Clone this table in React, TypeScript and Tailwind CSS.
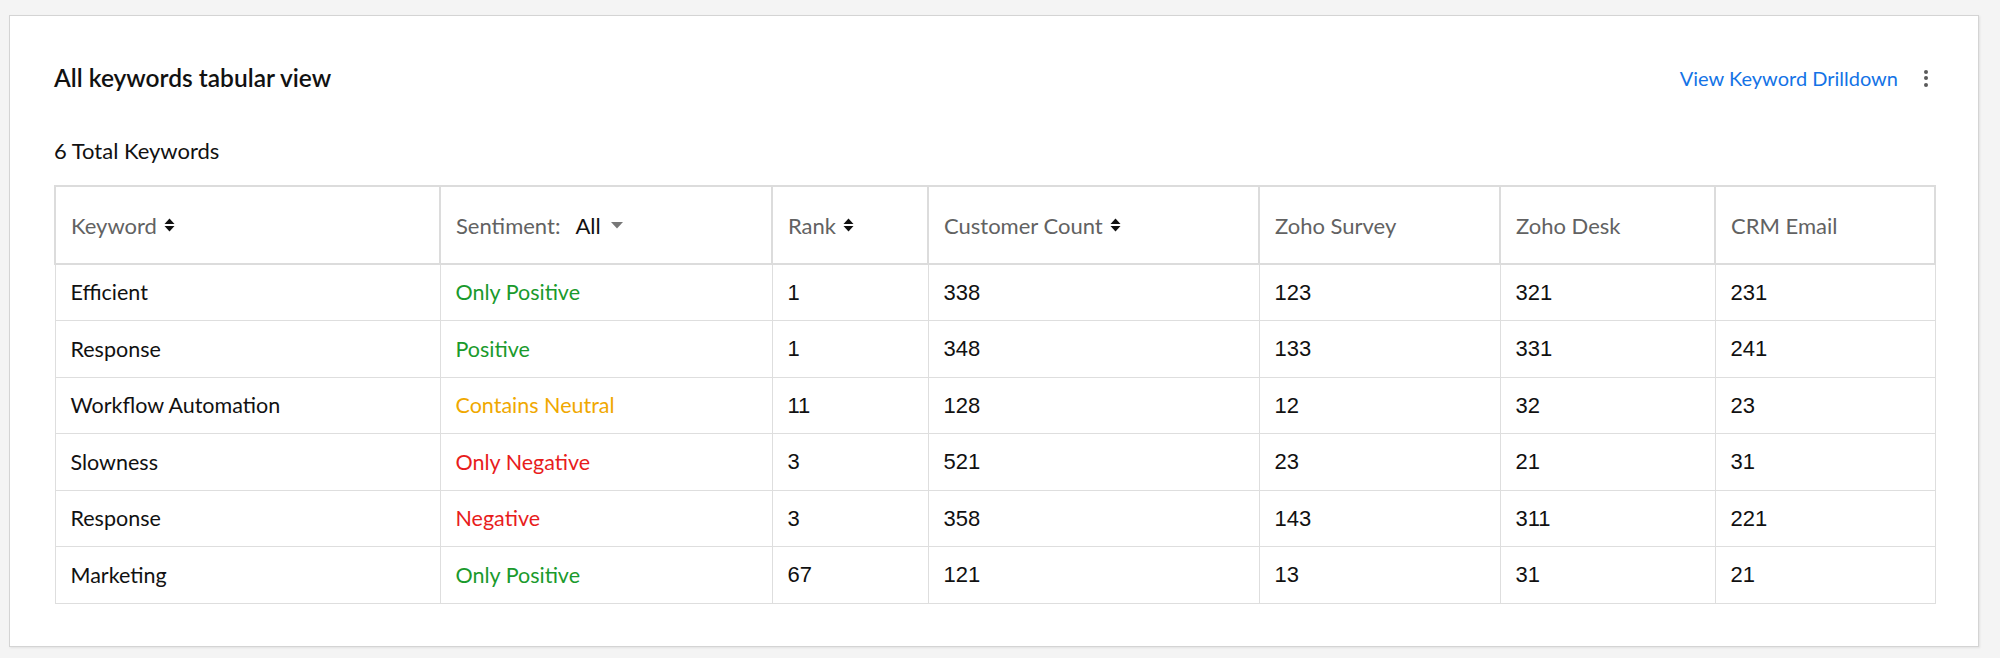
type Sentiment = "pos" | "neu" | "neg";

interface Row {
  keyword: string;
  sentiment: string;
  tone: Sentiment;
  rank: number;
  customers: number;
  survey: number;
  desk: number;
  crm: number;
}

const rows: Row[] = [
  { keyword: "Efficient", sentiment: "Only Positive", tone: "pos", rank: 1, customers: 338, survey: 123, desk: 321, crm: 231 },
  { keyword: "Response", sentiment: "Positive", tone: "pos", rank: 1, customers: 348, survey: 133, desk: 331, crm: 241 },
  { keyword: "Workflow Automation", sentiment: "Contains Neutral", tone: "neu", rank: 11, customers: 128, survey: 12, desk: 32, crm: 23 },
  { keyword: "Slowness", sentiment: "Only Negative", tone: "neg", rank: 3, customers: 521, survey: 23, desk: 21, crm: 31 },
  { keyword: "Response", sentiment: "Negative", tone: "neg", rank: 3, customers: 358, survey: 143, desk: 311, crm: 221 },
  { keyword: "Marketing", sentiment: "Only Positive", tone: "pos", rank: 67, customers: 121, survey: 13, desk: 31, crm: 21 },
];

const toneClass: Record<Sentiment, string> = {
  pos: "text-[#1a9a2c]",
  neu: "text-[#f0a800]",
  neg: "text-[#e81c1c]",
};

function SortIcon() {
  return (
    <svg width="11" height="14" viewBox="0 0 11 14" className="ml-[7px] shrink-0">
      <path d="M0.5 6 L5.5 0.5 L10.5 6 Z" fill="#111" />
      <path d="M0.5 8 L5.5 13.5 L10.5 8 Z" fill="#111" />
    </svg>
  );
}

function Kebab() {
  return (
    <div className="flex flex-col items-center gap-[2.5px] w-[16px]">
      <span className="block w-[4px] h-[4px] rounded-full bg-[#5a5a5a]" />
      <span className="block w-[4px] h-[4px] rounded-full bg-[#5a5a5a]" />
      <span className="block w-[4px] h-[4px] rounded-full bg-[#5a5a5a]" />
    </div>
  );
}

const th = "border-2 border-[#dcdcdc] px-[15px] text-left font-normal text-[#626262] text-[22px]";
const td = "border border-[#dedede] px-[15px]";
const num = "font-['Liberation_Sans',Arial,sans-serif] text-[22px] text-[#111]";

export default function App() {
  return (
    <div className="min-h-[658px] bg-[#f4f4f4] pt-[15px] pl-[9px] font-['Lato','Noto_Sans',sans-serif]">
      <div className="w-[1970px] h-[632px] bg-white border border-[#d4d4d4] shadow-[1px_1px_2px_rgba(0,0,0,0.08)] pt-[48px] px-[44px]">
        {/* Header */}
        <div className="flex items-center justify-between h-[28px]">
          <h2 className="text-[24.5px] leading-[28px] font-semibold text-[#111]">All keywords tabular view</h2>
          <div className="flex items-center gap-[20px]">
            <a className="text-[20px] leading-[28px] text-[#1473e6] cursor-pointer">View Keyword Drilldown</a>
            <Kebab />
          </div>
        </div>

        <p className="mt-[45px] text-[22px] leading-[28px] text-[#111]">6 Total Keywords</p>

        {/* Table */}
        <table className="mt-[20px] w-[1880px] table-fixed border-collapse">
          <colgroup>
            <col className="w-[385px]" />
            <col className="w-[332px]" />
            <col className="w-[156px]" />
            <col className="w-[331px]" />
            <col className="w-[241px]" />
            <col className="w-[215px]" />
            <col className="w-[220px]" />
          </colgroup>
          <thead>
            <tr className="h-[78px]">
              <th className={th}>
                <span className="flex items-center">Keyword<SortIcon /></span>
              </th>
              <th className={th}>
                <span className="flex items-center">
                  Sentiment:
                  <span className="ml-[15px] text-[#111]">All</span>
                  <svg width="12" height="7" viewBox="0 0 12 7" className="ml-[10px]">
                    <path d="M0 0 L12 0 L6 6.5 Z" fill="#777" />
                  </svg>
                </span>
              </th>
              <th className={th}>
                <span className="flex items-center">Rank<SortIcon /></span>
              </th>
              <th className={th}>
                <span className="flex items-center">Customer Count<SortIcon /></span>
              </th>
              <th className={th}>Zoho Survey</th>
              <th className={th}>Zoho Desk</th>
              <th className={th}>CRM Email</th>
            </tr>
          </thead>
          <tbody>
            {rows.map((r, i) => (
              <tr key={i} className="h-[56.5px]">
                <td className={`${td} text-[21.5px] text-[#111]`}>{r.keyword}</td>
                <td className={`${td} text-[21.5px] ${toneClass[r.tone]}`}>{r.sentiment}</td>
                <td className={`${td} ${num}`}>{r.rank}</td>
                <td className={`${td} ${num}`}>{r.customers}</td>
                <td className={`${td} ${num}`}>{r.survey}</td>
                <td className={`${td} ${num}`}>{r.desk}</td>
                <td className={`${td} ${num}`}>{r.crm}</td>
              </tr>
            ))}
          </tbody>
        </table>
      </div>
    </div>
  );
}
